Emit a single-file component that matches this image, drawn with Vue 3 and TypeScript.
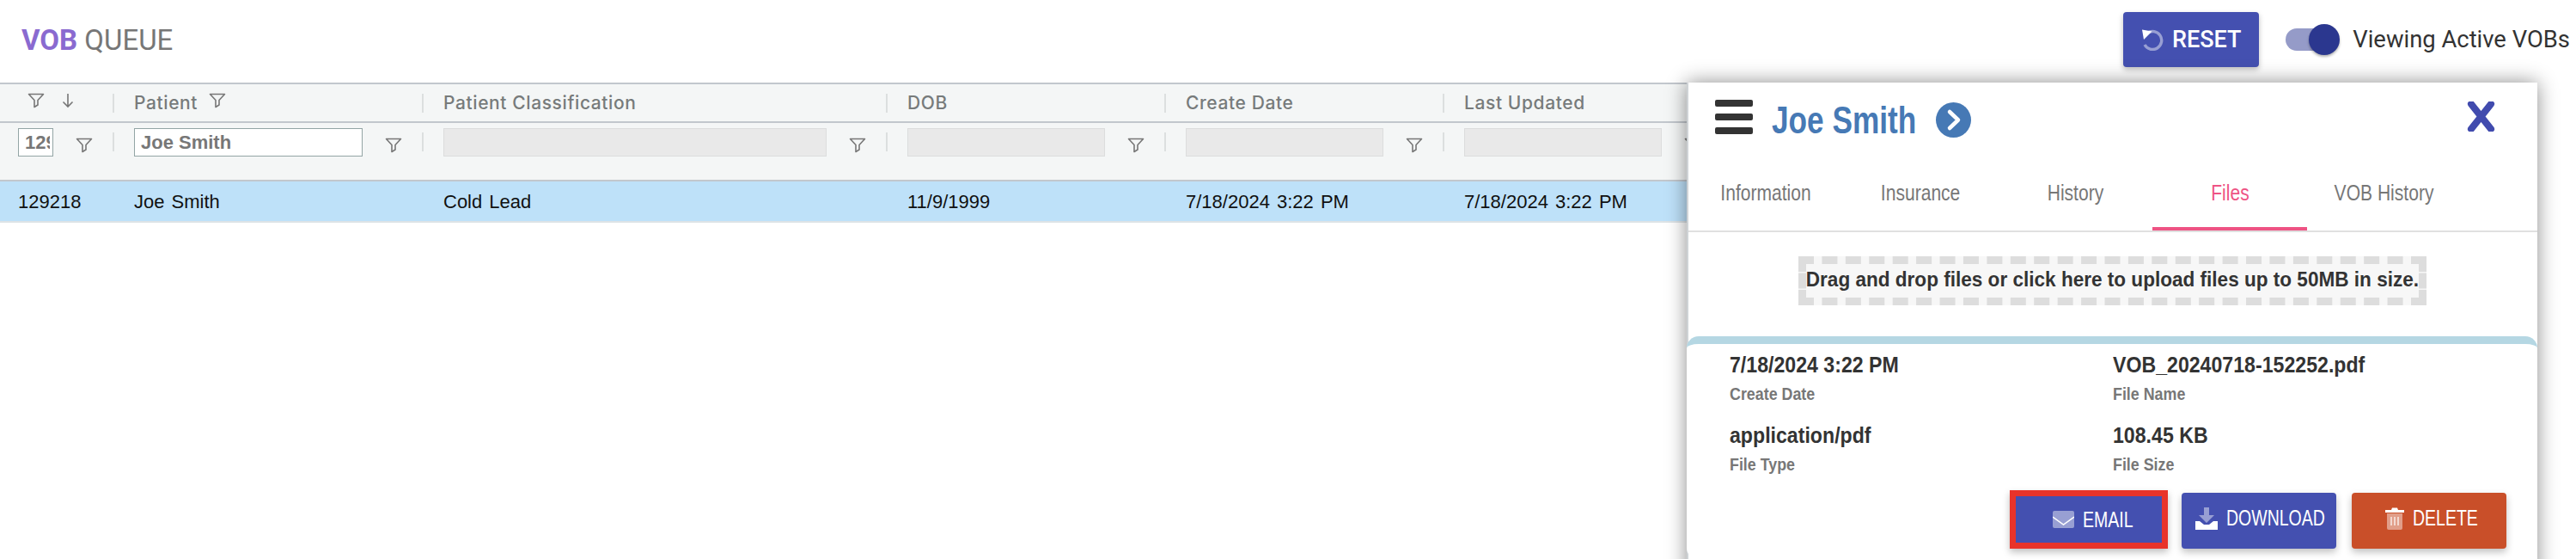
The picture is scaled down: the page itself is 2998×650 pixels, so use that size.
<template>
  <div class="page">
    <header class="topbar">
      <h1 class="title"><b>VOB</b> QUEUE</h1>
      <div class="actions">
        <button class="reset-btn">
          <svg class="reset-icon" viewBox="0 0 26 26">
            <path d="M7 5.5A10.5 10.5 0 1 1 4 19" fill="none" stroke="#fff" stroke-opacity=".45" stroke-width="3.4" />
            <path d="M1 1.5l11.5 2-9.5 9.5z" fill="#fff" />
          </svg>
          RESET
        </button>
        <div class="toggle"><span class="track"></span><span class="thumb"></span></div>
        <span class="toggle-label">Viewing Active VOBs</span>
      </div>
    </header>

    <section class="table">
      <div class="row head-row">
        <div v-for="col in columns" :key="col.key" class="cell" :style="{ width: col.width + 'px' }">
          <template v-if="col.key === 'id'">
            <svg class="funnel id-funnel" viewBox="0 0 20 18"><path d="M1.5 1.5h17l-6.5 7v5.5l-4 2.5V8.500z" /></svg>
            <svg class="sort" viewBox="0 0 14 18"><path d="M7 1v15M1.500 10.500L7 16l5.500-5.500" /></svg>
          </template>
          <span v-else class="col-name">{{ col.label }}</span>
          <svg v-if="col.key === 'patient'" class="funnel name-funnel" viewBox="0 0 20 18"><path d="M1.5 1.5h17l-6.5 7v5.5l-4 2.5V8.500z" /></svg>
          <i class="sep"></i>
        </div>
      </div>
      <div class="row filter-row">
        <div v-for="col in columns" :key="col.key" class="cell" :style="{ width: col.width + 'px' }">
          <input
            class="filter"
            :class="{ empty: !col.filter, narrow: col.key === 'id' }"
            :value="col.filter"
            :disabled="!col.filter"
            :style="{ width: col.input + 'px' }"
          />
          <svg class="funnel filter-funnel" viewBox="0 0 20 18"><path d="M1.5 1.5h17l-6.5 7v5.5l-4 2.5V8.500z" /></svg>
          <i class="sep"></i>
        </div>
      </div>
      <div class="row data-row">
        <div v-for="col in columns" :key="col.key" class="cell" :style="{ width: col.width + 'px' }">{{ col.value }}</div>
      </div>
    </section>

    <aside class="panel">
      <div class="panel-head">
        <div class="burger"><span></span><span></span><span></span></div>
        <span class="patient-name">Joe Smith</span>
        <svg class="go" viewBox="0 0 41 41">
          <circle cx="20.500" cy="20.500" r="20.500" fill="#4679b5" />
          <path d="M16 11l10 9.500L16 30" fill="none" stroke="#fff" stroke-width="4.500" stroke-linecap="round" stroke-linejoin="round" />
        </svg>
        <svg class="close" viewBox="0 0 35 35">
          <path d="M6 3l23 29M29 3L6 32" fill="none" stroke="#414bae" stroke-width="8" stroke-linecap="round" />
        </svg>
      </div>
      <nav class="tabs">
        <div v-for="tab in tabs" :key="tab" class="tab" :class="{ active: tab === 'Files' }"><span>{{ tab }}</span></div>
      </nav>
      <div class="drop"><span>Drag and drop files or click here to upload files up to 50MB in size.</span></div>
      <article class="file-card">
        <div class="facts">
          <div v-for="fact in facts" :key="fact.label" class="fact">
            <strong>{{ fact.value }}</strong>
            <small>{{ fact.label }}</small>
          </div>
        </div>
        <div class="buttons">
          <button class="btn email">
            <svg viewBox="0 0 25 20" width="25" height="20">
              <rect width="25" height="20" rx="2" fill="#fff" fill-opacity=".45" />
              <path d="M0 7l12.500 9L25 7" fill="none" stroke="#fff" stroke-width="1.500" />
            </svg>
            <span>EMAIL</span>
          </button>
          <button class="btn download">
            <svg viewBox="0 0 26 26" width="26" height="26">
              <path d="M10 0h6v9h6l-9 9-9-9h6z" fill="#fff" fill-opacity=".45" />
              <path d="M0 16h5l5 4h6l5-4h5v10H0z" fill="#fff" />
            </svg>
            <span>DOWNLOAD</span>
          </button>
          <button class="btn delete">
            <svg viewBox="0 0 22 26" width="22" height="26">
              <path d="M0 3h7l1-2.500h6L15 3h7v3H0z" fill="#fff" />
              <path d="M2 7h18v17a2 2 0 0 1-2 2H4a2 2 0 0 1-2-2z" fill="#fff" fill-opacity=".45" />
              <path d="M7 11v10M11 11v10M15 11v10" stroke="#fff" stroke-width="1.200" />
            </svg>
            <span>DELETE</span>
          </button>
        </div>
      </article>
    </aside>
  </div>
</template>

<script setup lang="ts">
interface Column {
  key: string;
  label: string;
  width: number;
  input: number;
  filter: string;
  value: string;
}

const columns: Column[] = [
  { key: 'id', label: '', width: 133, input: 41, filter: '129218', value: '129218' },
  { key: 'patient', label: 'Patient', width: 360, input: 266, filter: 'Joe Smith', value: 'Joe Smith' },
  { key: 'class', label: 'Patient Classification', width: 540, input: 446, filter: '', value: 'Cold Lead' },
  { key: 'dob', label: 'DOB', width: 324, input: 230, filter: '', value: '11/9/1999' },
  { key: 'created', label: 'Create Date', width: 324, input: 230, filter: '', value: '7/18/2024 3:22 PM' },
  { key: 'updated', label: 'Last Updated', width: 324, input: 230, filter: '', value: '7/18/2024 3:22 PM' },
];

const tabs = ['Information', 'Insurance', 'History', 'Files', 'VOB History'];

const facts = [
  { value: '7/18/2024 3:22 PM', label: 'Create Date' },
  { value: 'VOB_20240718-152252.pdf', label: 'File Name' },
  { value: 'application/pdf', label: 'File Type' },
  { value: '108.45 KB', label: 'File Size' },
];
</script>

<style>
html,
body {
  margin: 0;
  background: #fff;
  overflow: hidden;
}
</style>

<style scoped>
.page {
  position: relative;
  width: 2998px;
  height: 650px;
  overflow: hidden;
  font-family: "Liberation Sans", Arial, sans-serif;
}

.topbar {
  display: flex;
  justify-content: space-between;
  height: 96px;
  padding: 14px 7px 0 25px;
  box-sizing: border-box;
}

.title {
  margin: 13px 0 0;
  font: 400 33px/40px Roboto, sans-serif;
  color: #777;
}

.title b {
  font-weight: 700;
  color: #8a6ad0;
}

.actions {
  display: flex;
  align-items: flex-start;
}

.reset-btn {
  display: flex;
  align-items: center;
  justify-content: center;
  gap: 10px;
  width: 158px;
  height: 64px;
  padding: 0;
  border: 0;
  border-radius: 4px;
  background: #4450b0;
  color: #fff;
  font: 500 27px Roboto, sans-serif;
  box-shadow: 0 3px 6px rgba(0, 0, 0, 0.25);
}

.reset-icon {
  width: 26px;
  height: 26px;
}

.toggle {
  position: relative;
  width: 63px;
  height: 36px;
  margin: 14px 15px 0 31px;
}

.track {
  position: absolute;
  left: 0;
  top: 5px;
  width: 58px;
  height: 26px;
  border-radius: 13px;
  background: #959bc8;
}

.thumb {
  position: absolute;
  right: 0;
  top: 0;
  width: 36px;
  height: 36px;
  border-radius: 50%;
  background: #2b378f;
  box-shadow: 0 2px 3px rgba(0, 0, 0, 0.3);
}

.toggle-label {
  margin-top: 14px;
  font: 400 27.4px/36px Roboto, sans-serif;
  color: #333;
}

.table {
  width: 1963px;
  overflow: hidden;
}

.row {
  display: flex;
  width: 2200px;
}

.cell {
  position: relative;
  display: flex;
  align-items: center;
  flex: none;
  box-sizing: border-box;
  padding-left: 23px;
}

.cell:first-child {
  padding-left: 21px;
}

.head-row {
  height: 47px;
  border-top: 2px solid #c2c7cd;
  border-bottom: 2px solid #c2c7cd;
  box-sizing: border-box;
  background: #f4f6f6;
}

.col-name {
  font: 500 21px Inter, sans-serif;
  color: #777b7b;
  letter-spacing: 0.6px;
}

.sep {
  position: absolute;
  right: 0;
  top: 11px;
  width: 2px;
  height: 22px;
  background: #dcdfdf;
}

.filter-row {
  height: 68px;
  border-bottom: 2px solid #c2c7cd;
  box-sizing: border-box;
  background: #f4f6f6;
  align-items: flex-start;
}

.filter-row .cell {
  height: 66px;
  padding-top: 6px;
  align-items: flex-start;
}

.filter {
  flex: none;
  height: 33px;
  box-sizing: border-box;
  padding: 0 3px 0 7px;
  border: 1px solid #93a5a5;
  background: #fff;
  font: 700 22px "Liberation Sans", Arial, sans-serif;
  color: #777;
  outline: none;
}

.filter.empty {
  border-color: #dcdddd;
  background: #e9e9e9;
}

.funnel {
  flex: none;
  width: 20px;
  height: 18px;
  fill: none;
  stroke: #777;
  stroke-width: 1.600;
  stroke-linejoin: round;
}

.id-funnel {
  margin: -6px 0 0 11px;
}

.sort {
  width: 14px;
  height: 18px;
  margin: -6px 0 0 20px;
  fill: none;
  stroke: #777;
  stroke-width: 1.600;
}

.name-funnel {
  margin: -6px 0 0 13px;
}

.filter-funnel {
  margin: 11px 0 0 26px;
}

.data-row {
  height: 48px;
  padding-top: 1px;
  border-bottom: 2px solid #dde3e6;
  box-sizing: border-box;
  background: #bee1f9;
  font-size: 22px;
  word-spacing: 2px;
  color: #111;
}

.panel {
  position: absolute;
  left: 1963px;
  top: 96px;
  width: 990px;
  height: 600px;
  box-sizing: border-box;
  border-left: 2px solid #cfd3d6;
  background: #fff;
  box-shadow: 0 0 22px rgba(0, 0, 0, 0.45);
}

.panel-head {
  display: flex;
  align-items: center;
  height: 76px;
  padding: 11px 0 0 31px;
  box-sizing: border-box;
}

.burger {
  display: flex;
  flex-direction: column;
  gap: 8px;
  width: 44px;
  margin-top: -7px;
}

.burger span {
  height: 8px;
  border-radius: 2px;
  background: #333;
}

.patient-name {
  width: 169px;
  margin-left: 22px;
  font-size: 44px;
  font-weight: 700;
  line-height: 50px;
  white-space: nowrap;
  color: #4679b5;
  transform: scaleX(0.8);
  transform-origin: left;
}

.go {
  width: 41px;
  height: 41px;
  margin-left: 22px;
}

.close {
  width: 35px;
  height: 35px;
  margin: -8px 48px 0 auto;
}

.tabs {
  display: flex;
  height: 98px;
  box-sizing: border-box;
  border-bottom: 2px solid #e0e0e0;
}

.tab {
  display: flex;
  justify-content: center;
  width: 180px;
  padding-top: 35px;
  box-sizing: border-box;
  font-size: 26px;
  line-height: 34px;
  color: #777;
}

.tab span {
  transform: scaleX(0.81);
}

.tab.active {
  height: 96px;
  border-bottom: 4px solid #ee5384;
  color: #ee5384;
}

.drop {
  width: 731px;
  height: 57px;
  margin: 28px 0 0 128px;
  box-sizing: border-box;
  border: 9px dashed #ddd;
  background: #f7f7f7;
  font-size: 24px;
  font-weight: 700;
  line-height: 35px;
  white-space: nowrap;
  color: #333;
  display: flex;
  justify-content: center;
}

.drop span {
  flex: none;
  transform: scaleX(0.94);
}

.file-card {
  margin: 36px 0 0 -2px;
  height: 260px;
  box-sizing: border-box;
  padding: 8px 36px 0 50px;
  border-top: 9px solid #b5d7e3;
  border-radius: 14px;
  background: #fff;
}

.facts {
  display: grid;
  grid-template-columns: 446px 1fr;
  row-gap: 20px;
}

.fact {
  display: flex;
  flex-direction: column;
  align-items: flex-start;
}

.fact strong,
.fact small {
  white-space: nowrap;
  transform-origin: left;
}

.fact strong {
  font-size: 26px;
  line-height: 32px;
  color: #333;
  transform: scaleX(0.89);
}

.fact small {
  margin-top: 6px;
  font-size: 21px;
  font-weight: 700;
  line-height: 24px;
  color: #777;
  transform: scaleX(0.85);
}

.buttons {
  display: flex;
  justify-content: flex-end;
  align-items: flex-end;
  gap: 16px;
  margin-top: 18px;
}

.btn {
  display: flex;
  align-items: center;
  justify-content: center;
  gap: 10px;
  width: 180px;
  height: 65px;
  padding: 0 0 6px;
  box-sizing: border-box;
  border: 0;
  border-radius: 4px;
  background: #4450b0;
  color: #fff;
  font: 400 25px "Liberation Sans", sans-serif;
  box-shadow: 0 4px 8px rgba(0, 0, 0, 0.25);
}

.btn span {
  white-space: nowrap;
  text-align: left;
  transform: scaleX(0.78);
  transform-origin: left;
}

.btn.email {
  width: 184px;
  height: 68px;
  padding: 0 0 0 8px;
  border: 7px solid #e8332a;
  border-radius: 0;
}

.btn.email span {
  width: 58px;
}

.btn.download span {
  width: 113px;
}

.btn.delete {
  margin-left: 2px;
  background: #c94f29;
}

.btn.delete span {
  width: 71px;
}
</style>
